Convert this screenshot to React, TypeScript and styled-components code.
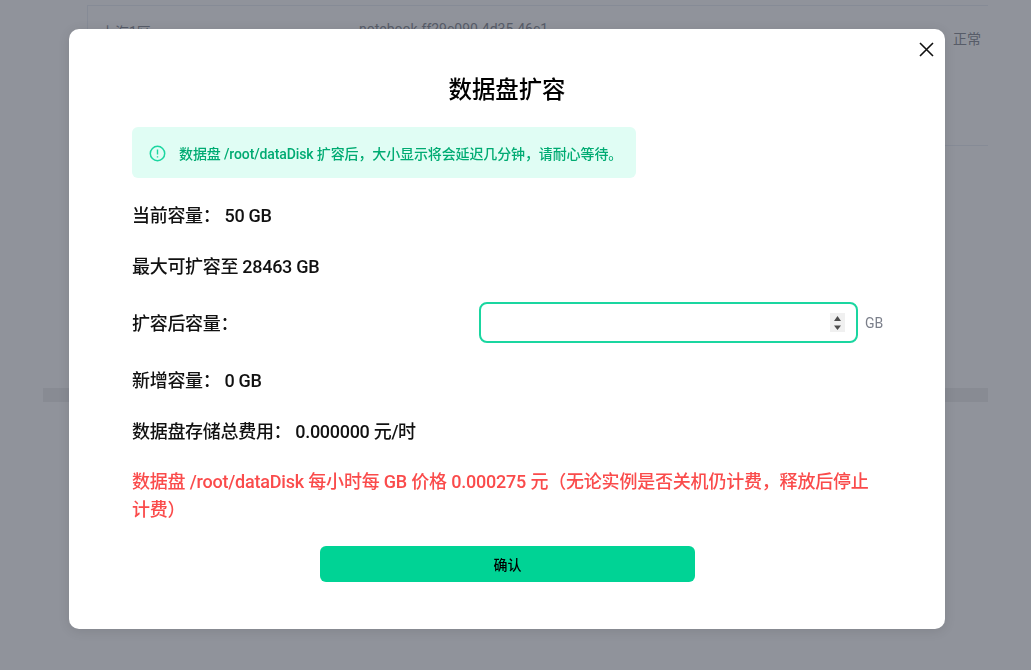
import styled, { createGlobalStyle } from "styled-components";

const GlobalStyle = createGlobalStyle`
  html, body {
    margin: 0;
    padding: 0;
    height: 100%;
    overflow: hidden;
    background: #fff;
    font-family: Roboto, "Noto Sans CJK SC", sans-serif;
  }
`;

const Page = styled.div`
  width: 1031px;
  height: 670px;
  padding: 0 43px;
  box-sizing: border-box;
  overflow: hidden;
`;

const TableRow = styled.div`
  height: 141px;
  margin-top: 5px;
  border-top: 1px solid #ebeef5;
  border-bottom: 1px solid #ebeef5;
  display: flex;
  margin-left: 44px;
  padding: 15px 0 0 13px;
  box-sizing: border-box;
  border-left: 1px solid #ebeef5;
  font-size: 14px;
  color: #8d9199;
`;

const Cell = styled.div<{ $width: number; $top?: number }>`
  width: ${(props) => props.$width}px;
  margin-top: ${(props) => props.$top ?? 0}px;
  flex-shrink: 0;
  white-space: nowrap;
`;

const ScrollBar = styled.div`
  height: 14px;
  margin-top: 242px;
  background: #efefef;
`;

const Overlay = styled.div`
  position: fixed;
  inset: 0;
  background: rgba(33, 40, 56, 0.5);
`;

const Modal = styled.div`
  position: absolute;
  left: 69px;
  top: 29px;
  width: 876px;
  height: 600px;
  box-sizing: border-box;
  padding: 43px 63px 0;
  background: #fff;
  border-radius: 10px;
  box-shadow: 0 2px 12px rgba(0, 0, 0, 0.1);
  color: #111;
`;

const CloseButton = styled.button`
  position: absolute;
  top: 11px;
  right: 10px;
  width: 18px;
  height: 18px;
  padding: 0;
  border: 0;
  background: none;
  color: #111;
  display: flex;
`;

const Title = styled.h2`
  margin: 0;
  text-align: center;
  font-size: 23.4px;
  line-height: 36px;
  font-weight: 500;
  color: #000;
`;

const Alert = styled.div`
  width: 504px;
  height: 51px;
  margin-top: 19px;
  box-sizing: border-box;
  padding-left: 17px;
  display: flex;
  align-items: center;
  gap: 13px;
  background: #e0fdf4;
  border-radius: 6px;
  font-size: 14px;
  font-weight: 500;
  letter-spacing: -0.12px;
  color: #00ab72;
`;

const AlertIcon = styled.svg`
  margin-top: 1px;
  flex-shrink: 0;
`;

const Line = styled.div<{ $top: number }>`
  margin-top: ${(props) => props.$top}px;
  font-size: 18px;
  line-height: 28px;
  font-weight: 500;
  letter-spacing: -0.3px;
  color: #111;
`;

const Label = styled.span`
  margin-right: 4px;
`;

const FormRow = styled.div`
  margin-top: 21px;
  height: 41px;
  display: flex;
  align-items: center;
  font-size: 18px;
  font-weight: 500;
  letter-spacing: -0.3px;
`;

const FormLabel = styled.label`
  width: 347px;
  flex-shrink: 0;
  margin-top: -2px;
`;

const InputBox = styled.div`
  position: relative;
  width: 379px;
  height: 41px;
  flex-shrink: 0;
`;

const NumberInput = styled.input`
  width: 100%;
  height: 100%;
  box-sizing: border-box;
  border: 2px solid #1ad6a0;
  border-radius: 8px;
  padding: 0 11px;
  outline: none;
  background: #fff;
  font-size: 14px;
  appearance: textfield;

  &::-webkit-inner-spin-button {
    appearance: none;
  }
`;

const Stepper = styled.span`
  position: absolute;
  top: 11px;
  right: 13px;
  width: 15px;
  height: 19px;
  background: #f0f0f0;
  display: flex;
  align-items: center;
  justify-content: center;
`;

const Unit = styled.span`
  margin-left: 7px;
  flex-shrink: 0;
  font-size: 14px;
  font-weight: 400;
  letter-spacing: 0;
  color: #7b7f8a;
`;

const Warning = styled.div`
  margin-top: 22px;
  font-size: 18px;
  line-height: 28px;
  font-weight: 500;
  letter-spacing: -0.2px;
  color: #fa4b4b;
`;

const Footer = styled.div`
  margin-top: 22px;
  padding-left: 1px;
  display: flex;
  justify-content: center;
`;

const ConfirmButton = styled.button`
  width: 375px;
  height: 36px;
  border: 0;
  border-radius: 6px;
  background: #00d395;
  color: #000;
  font-family: inherit;
  font-size: 14px;
  font-weight: 500;
`;

export default function App() {
  return (
    <>
      <GlobalStyle />
      <Page>
        <TableRow>
          <Cell $width={258}>上海1区</Cell>
          <Cell $width={594}>notebook-ff29c090-4d35-46c1</Cell>
          <Cell $width={40} $top={7}>
            正常
          </Cell>
        </TableRow>
        <ScrollBar />
      </Page>
      <Overlay />
      <Modal>
        <CloseButton aria-label="关闭">
          <svg width="18" height="18" viewBox="0 0 18 18" fill="none">
            <path d="M3 3L16 16M16 3L3 16" stroke="currentColor" strokeWidth="1.6" />
          </svg>
        </CloseButton>
        <Title>数据盘扩容</Title>
        <Alert>
          <AlertIcon width="17" height="17" viewBox="0 0 17 17" fill="none">
            <circle cx="8.5" cy="8.5" r="7.2" stroke="#1ad6a0" strokeWidth="1.5" />
            <path d="M8.5 4.6V9.6M8.5 11.2V12.4" stroke="#1ad6a0" strokeWidth="1.4" />
          </AlertIcon>
          数据盘 /root/dataDisk 扩容后，大小显示将会延迟几分钟，请耐心等待。
        </Alert>
        <Line $top={24}>
          <Label>当前容量：</Label>50 GB
        </Line>
        <Line $top={23}>最大可扩容至 28463 GB</Line>
        <FormRow>
          <FormLabel>扩容后容量：</FormLabel>
          <InputBox>
            <NumberInput type="number" />
            <Stepper>
              <svg width="7" height="14" viewBox="0 0 7 14" fill="#4d4d4d">
                <path d="M3.5 0L7 5H0ZM3.5 14L0 9.5H7Z" />
              </svg>
            </Stepper>
          </InputBox>
          <Unit>GB</Unit>
        </FormRow>
        <Line $top={24}>
          <Label>新增容量：</Label>0 GB
        </Line>
        <Line $top={23}>
          <Label>数据盘存储总费用：</Label>0.000000 元/时
        </Line>
        <Warning>
          数据盘 /root/dataDisk 每小时每 GB 价格 0.000275 元（无论实例是否关机仍计费，释放后停止计费）
        </Warning>
        <Footer>
          <ConfirmButton>确认</ConfirmButton>
        </Footer>
      </Modal>
    </>
  );
}
